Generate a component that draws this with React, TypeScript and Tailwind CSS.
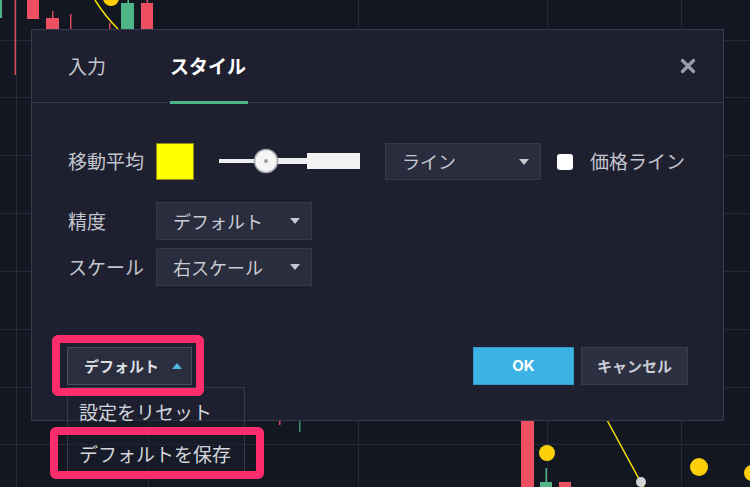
import { X } from "lucide-react";

function ChartBg() {
  const hLines = [40, 97, 155, 213, 271, 329, 387, 444];
  const vLines = [16, 148, 358, 547, 681];
  return (
    <svg className="absolute inset-0" width={750} height={487} viewBox="0 0 750 487">
      {hLines.map((y) => (
        <line key={"h" + y} x1={0} x2={750} y1={y + 0.5} y2={y + 0.5} stroke="#262a36" strokeWidth={1} />
      ))}
      {vLines.map((x) => (
        <line key={"v" + x} x1={x + 0.5} x2={x + 0.5} y1={0} y2={487} stroke="#262a36" strokeWidth={1} />
      ))}
      {/* velas de cima */}
      <rect x={0} y={0} width={2} height={18} fill="#4fb586" />
      <rect x={14.5} y={0} width={1.5} height={75} fill="#d9475a" />
      <rect x={27} y={0} width={12} height={19} fill="#ee5062" />
      <rect x={52} y={11} width={1.5} height={8} fill="#d9475a" />
      <rect x={46} y={18} width={13} height={11} fill="#ee5062" />
      <rect x={70} y={14} width={1.5} height={15} fill="#d9475a" />
      <rect x={109} y={23} width={1.5} height={6} fill="#d9475a" />
      <path d="M95 0 C 100 8, 106 17, 118 29" fill="none" stroke="#f6e10a" strokeWidth={1.5} />
      <circle cx={111} cy={-2} r={8} fill="#fdd00a" />
      <rect x={127.5} y={0} width={1.5} height={3} fill="#4fb586" />
      <rect x={121} y={3} width={13} height={26} fill="#4fb586" />
      <rect x={146.5} y={0} width={1.5} height={3} fill="#d9475a" />
      <rect x={141} y={3} width={12} height={26} fill="#ee5062" />
      {/* velas de baixo */}
      <rect x={279} y={420} width={1.5} height={5} fill="#d9475a" />
      <rect x={299} y={420} width={1.5} height={12} fill="#3f8f6a" />
      <rect x={521} y={420} width={13} height={67} fill="#ee5062" />
      <circle cx={547} cy={453} r={8} fill="#fdd00a" />
      <rect x={545.5} y={468} width={1.5} height={14} fill="#4fb586" />
      <rect x={540} y={482} width={12} height={5} fill="#4fb586" />
      <rect x={559} y={482} width={12} height={5} fill="#ee5062" />
      <line x1={607} y1={420} x2={645} y2={490} stroke="#f6e10a" strokeWidth={1.5} />
      <circle cx={641} cy={482} r={5} fill="#d4d4d8" />
      <circle cx={699} cy={467} r={9} fill="#fdd00a" />
      <circle cx={752} cy={473} r={8} fill="#fdd00a" />
    </svg>
  );
}

function Caret({ up = false, color = "#c5c7cf" }: { up?: boolean; color?: string }) {
  return (
    <svg width={10} height={6} viewBox="0 0 10 6">
      <path d={up ? "M0 6 L5 0 L10 6 Z" : "M0 0 L10 0 L5 6 Z"} fill={color} />
    </svg>
  );
}

function Select({ value, width }: { value: string; width: string }) {
  return (
    <div className={`${width} h-full flex items-center justify-between pl-[16px] pr-[11px] bg-[#2a2d3d] border border-[#353949] text-[18px] text-[#c8cad2]`}>
      <span>{value}</span>
      <Caret />
    </div>
  );
}

function WidthSlider() {
  return (
    <svg width={141} height={37} viewBox="0 0 141 37">
      <rect x={0} y={16} width={47} height={4} fill="#eeeeee" />
      <rect x={47} y={15} width={42} height={6} fill="#eeeeee" />
      <rect x={88} y={10} width={53} height={16} fill="#f2f2f2" />
      <circle cx={47} cy={18} r={11.5} fill="#f5f5f5" stroke="#a4a6ad" strokeWidth={1.5} />
      <circle cx={47} cy={18} r={2} fill="#9a9ca4" />
    </svg>
  );
}

export default function App() {
  return (
    <div className="relative w-[750px] h-[487px] overflow-hidden bg-[#131722] font-['Noto_Sans_CJK_JP',sans-serif]">
      <ChartBg />

      {/* Dialog */}
      <div className="absolute left-[31px] top-[29px] w-[693px] h-[392px] bg-[#1e2030] border border-[#363a4d] flex flex-col">
        <div className="h-[73px] border-b border-[#363a4d] flex items-stretch pl-[36px] pr-[24px]">
          <div className="flex items-center text-[19px] text-[#c3c5cd]">入力</div>
          <div className="relative ml-[64px] flex items-center text-[19px] font-bold text-white">
            スタイル
            <span className="absolute left-0 right-[-2px] bottom-[-2px] h-[3px] bg-[#4fb689]" />
          </div>
          <div className="ml-auto flex items-center">
            <X className="w-[22px] h-[22px] text-[#9b9da6]" strokeWidth={3.5} />
          </div>
        </div>

        <div className="pt-[40px] px-[36px] text-[#c3c5cd]">
          <div className="h-[37px] flex items-center">
            <div className="w-[88px] text-[19px]">移動平均</div>
            <div className="w-[38px] h-[37px] bg-[#ffff00] border border-[#8d8d10]" />
            <div className="ml-[25px]">
              <WidthSlider />
            </div>
            <div className="ml-[25px] h-[37px]">
              <Select value="ライン" width="w-[156px]" />
            </div>
            <div className="ml-[16px] w-[16px] h-[16px] rounded-[3px] bg-white" />
            <div className="ml-[17px] text-[19px]">価格ライン</div>
          </div>

          <div className="mt-[22px] h-[38px] flex items-center">
            <div className="w-[88px] text-[19px]">精度</div>
            <div className="h-[38px]">
              <Select value="デフォルト" width="w-[156px]" />
            </div>
          </div>

          <div className="mt-[8px] h-[38px] flex items-center">
            <div className="w-[88px] text-[19px]">スケール</div>
            <div className="h-[38px]">
              <Select value="右スケール" width="w-[156px]" />
            </div>
          </div>
        </div>

        <div className="mt-auto px-[35px] pb-[35px] flex items-center">
          <button className="w-[125px] h-[38px] flex items-center pl-[16px] gap-[13px] bg-[#2b2e3e] border border-[#494d5f] text-[15px] font-bold text-[#dcdee4]">
            デフォルト
            <Caret up color="#4db5e2" />
          </button>
          <button className="ml-auto w-[101px] h-[38px] bg-[#3bb3e4] border border-[#2f9ccc] text-[15px] font-bold text-white font-['Inter',sans-serif]">
            OK
          </button>
          <button className="ml-[7px] w-[107px] h-[38px] bg-[#2d3040] border border-[#393d4f] text-[15px] font-bold text-[#c9ccd4]">
            キャンセル
          </button>
        </div>
      </div>

      {/* Menu */}
      <div className="absolute left-[67px] top-[387px] w-[178px] h-[90px] pt-[3px] border border-[#363a4d] bg-[#1e2030]/40 text-[19px] text-[#d3d5dc]">
        <div className="h-[42px] flex items-center pl-[11px]">設定をリセット</div>
        <div className="h-[42px] flex items-center pl-[11px]">デフォルトを保存</div>
      </div>

      {/* Destaques */}
      <div className="absolute left-[52px] top-[335px] w-[152px] h-[61px] border-[8px] border-[#fd2d6d] rounded-[6px]" />
      <div className="absolute left-[50px] top-[427px] w-[214px] h-[52px] border-[8px] border-[#fd2d6d] rounded-[6px]" />
    </div>
  );
}
